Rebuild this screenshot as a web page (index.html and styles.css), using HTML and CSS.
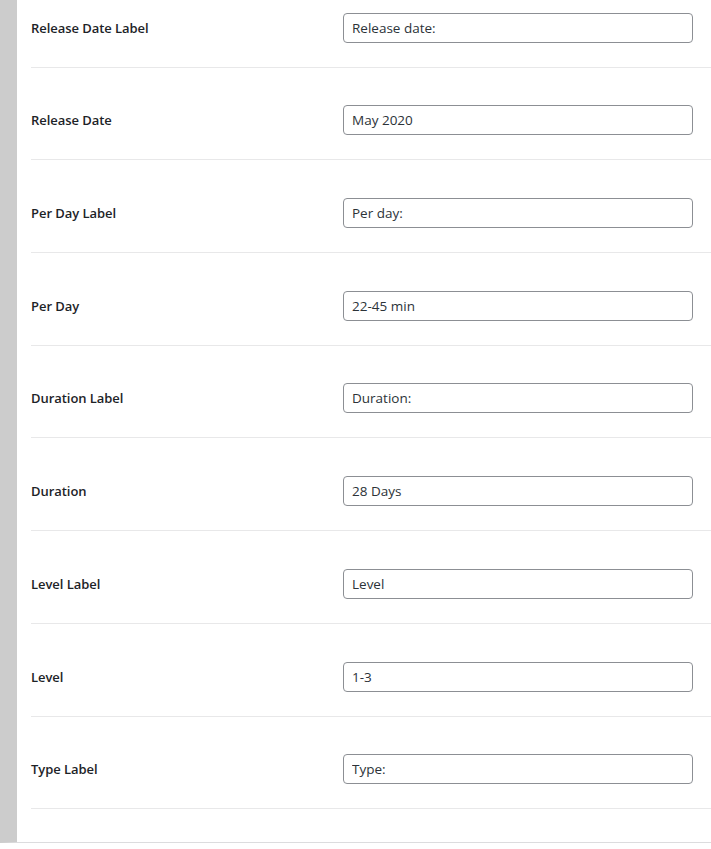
FILE: index.html
```html
<!DOCTYPE html>
<html>
<head>
<meta charset="utf-8">
<link rel="stylesheet" href="styles.css">
</head>
<body>
<div class="panel">
  <div class="rows">
    <div class="row"><div class="label">Release Date Label</div><input class="field" type="text" value="Release date:"></div>
    <div class="row"><div class="label">Release Date</div><input class="field" type="text" value="May 2020"></div>
    <div class="row"><div class="label">Per Day Label</div><input class="field" type="text" value="Per day:"></div>
    <div class="row"><div class="label">Per Day</div><input class="field" type="text" value="22-45 min"></div>
    <div class="row"><div class="label">Duration Label</div><input class="field" type="text" value="Duration:"></div>
    <div class="row"><div class="label">Duration</div><input class="field" type="text" value="28 Days"></div>
    <div class="row"><div class="label">Level Label</div><input class="field" type="text" value="Level"></div>
    <div class="row"><div class="label">Level</div><input class="field" type="text" value="1-3"></div>
    <div class="row"><div class="label">Type Label</div><input class="field" type="text" value="Type:"></div>
  </div>
</div>
</body>
</html>
```
FILE: styles.css
```css
html, body {
  margin: 0;
  padding: 0;
  background: #fff;
  overflow: hidden;
}
body {
  font-family: "Open Sans", "Noto Sans", sans-serif;
  color: #1d2327;
}
.panel {
  height: 843px;
  box-sizing: border-box;
  border-left: 17px solid #cccccc;
  border-bottom: 1px solid #dcdcde;
  overflow: hidden;
}
.rows {
  margin-top: -25px;
  margin-left: 14px;
}
.row {
  display: flex;
  align-items: center;
  padding: 37.7px 18px 24px 0;
  border-bottom: 1px solid #e8e8e9;
}
.label {
  width: 312px;
  font-size: 13px;
  font-weight: 600;
  color: #1d2327;
  letter-spacing: -0.05px;
}
.field {
  width: 350px;
  height: 30px;
  box-sizing: border-box;
  margin: 0;
  padding: 0 8px;
  border: 1px solid #8c8f94;
  border-radius: 4px;
  font-family: "Open Sans", "Noto Sans", sans-serif;
  font-size: 13.5px;
  color: #2c3338;
  background: #fff;
  outline: none;
}
```
